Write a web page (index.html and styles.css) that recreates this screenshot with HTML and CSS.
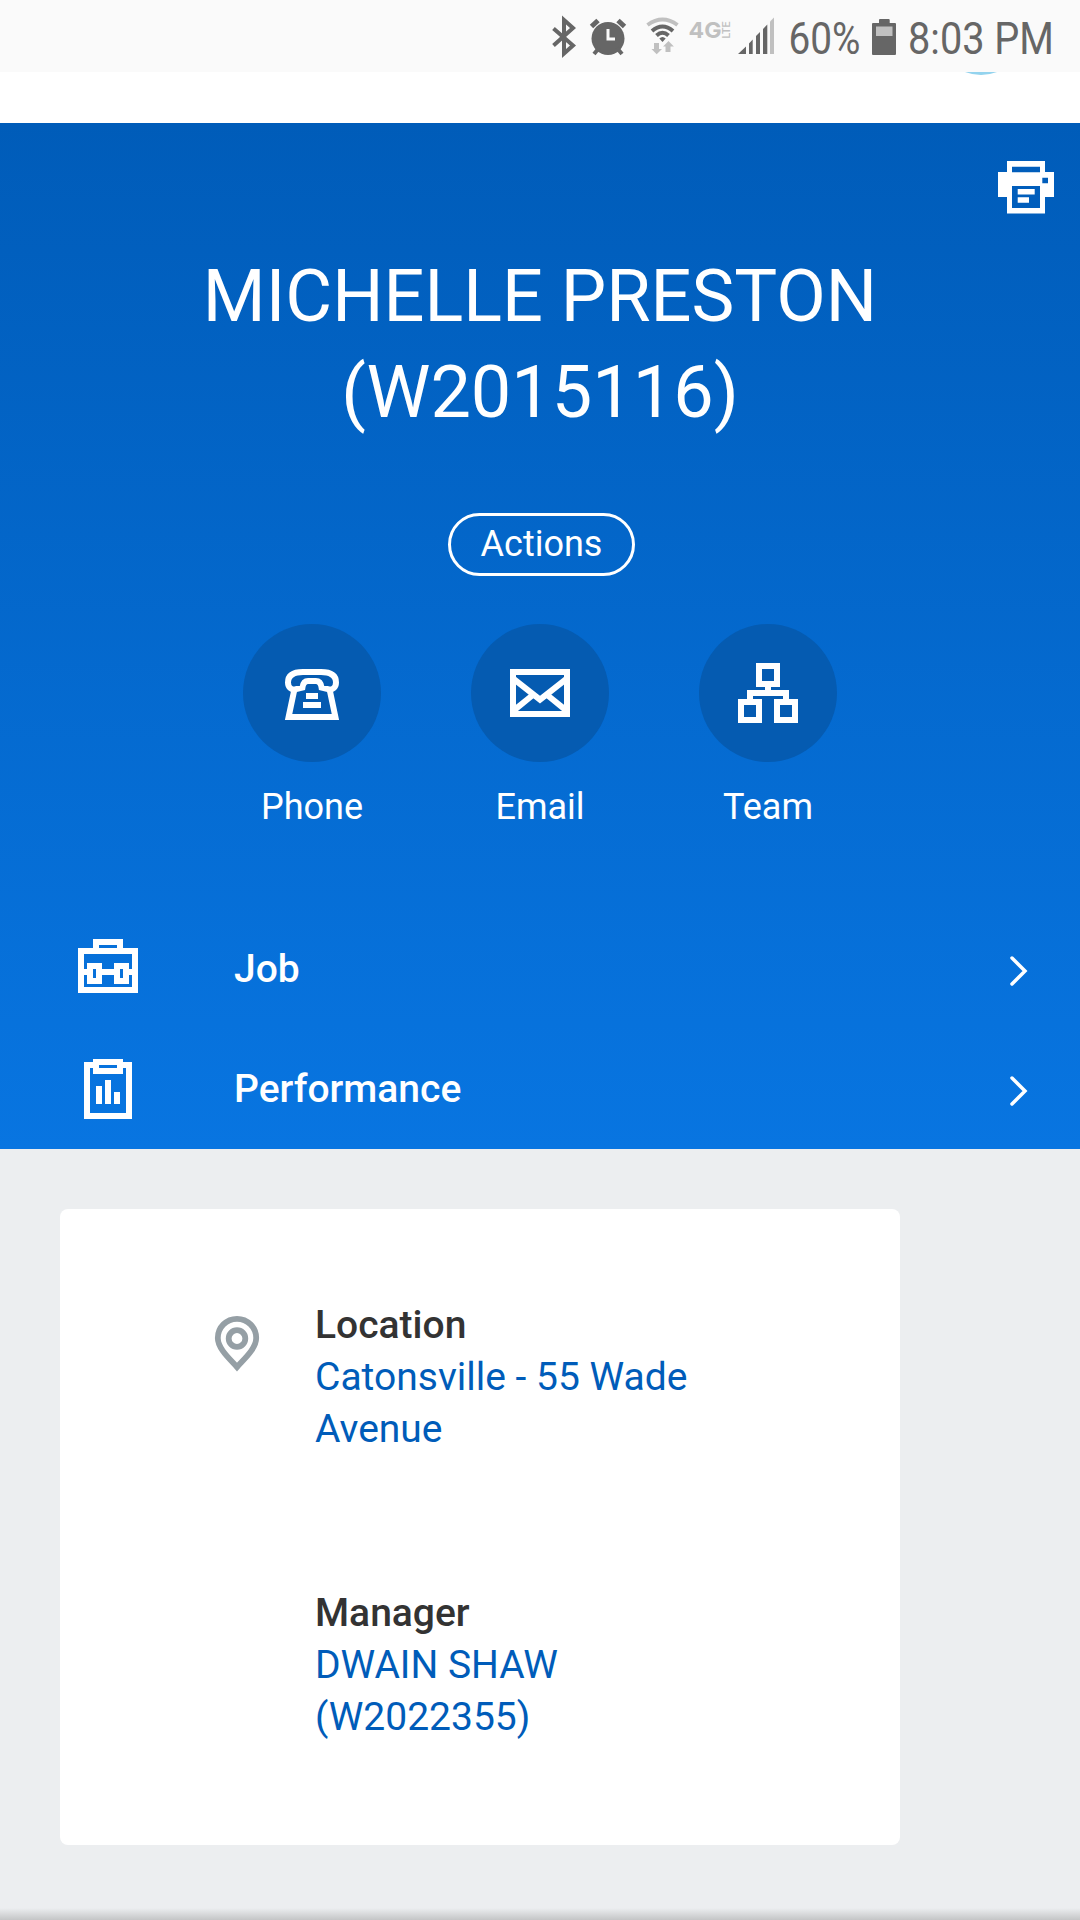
FILE: index.html
```
<!DOCTYPE html>
<html lang="en">
<head>
  <meta charset="UTF-8" />
  <meta name="viewport" content="width=device-width, initial-scale=1.0" />
  <title>Worker Profile</title>
  <link rel="stylesheet" href="styles.css">
</head>
<body>

  <div class="statusbar">
    <!-- bluetooth -->
    <svg width="40" height="72" viewBox="545 0 40 72">
      <path class="line" d="M553.5 28.5L573 45.5L564 53.5V20L573 28L553.5 45.5" />
    </svg>
    <!-- alarm -->
    <svg width="50" height="72" viewBox="585 0 50 72">
      <circle cx="608" cy="38.5" r="16.5" />
      <path class="line" d="M594 54L599 48M622 54L617 48" />
      <path class="line bell" d="M591.5 26.5L598 20.5M618 20.5L624.5 26.5" />
      <path class="hands" d="M608 29V39H615" />
    </svg>
    <!-- wifi -->
    <svg width="50" height="72" viewBox="635 0 50 72">
      <path class="line light-line" d="M647.5 25Q662.5 14 677.5 25" />
      <path class="line" d="M652 31Q662.5 22 673 31" />
      <path class="line" d="M656.5 35.5Q662.5 30 668.5 35.5" />
      <path d="M659.3 38.5Q662.5 35.5 665.7 38.5L662.5 42Z" />
      <path class="light" d="M654 43h5v6h3l-5.3 5.3l-5.2-5.3h2.5zM665.5 52h5v-5.5h3.4l-5.4-5.5l-5.5 5.5h2.5z" />
    </svg>
    <!-- network type -->
    <svg width="50" height="72" viewBox="685 0 50 72">
      <text class="light net" x="688.5" y="38" textLength="33" lengthAdjust="spacingAndGlyphs">4G</text>
      <text class="light lte" transform="translate(730 38.5) rotate(-90)" textLength="17" lengthAdjust="spacingAndGlyphs">LTE</text>
    </svg>
    <!-- signal -->
    <svg width="45" height="72" viewBox="735 0 45 72">
      <path d="M738 54L746 46.5V54zM749 54V43.5L752.7 39.5V54zM756 54V36L760 32V54zM763 54V29L767.3 24.5V54z" />
      <path class="light" d="M770 54V21.5L774 17.5V54z" />
    </svg>
    <svg width="85" height="72" viewBox="780 0 85 72">
      <text class="clock" x="788.5" y="54" textLength="72" lengthAdjust="spacingAndGlyphs">60%</text>
    </svg>
    <!-- battery -->
    <svg width="40" height="72" viewBox="865 0 40 72">
      <path d="M873 23h6v-3q0-1 1-1h8.7q1 0 1 1v3h5.3q1 0 1 1v30q0 1-1 1h-22q-1 0-1-1V24q0-1 1-1z" />
      <rect class="light" x="876" y="26.5" width="16.5" height="9.5" />
    </svg>
    <svg width="175" height="72" viewBox="905 0 175 72">
      <text class="clock" x="908" y="54" textLength="146" lengthAdjust="spacingAndGlyphs">8:03 PM</text>
    </svg>
  </div>

  <div class="topbar">
    <div class="avatar"></div>
  </div>

  <div class="profile">
    <div class="toolbar">
      <svg class="print" width="56" height="53" viewBox="0 0 56 53">
        <path fill-rule="evenodd" d="M9 0H47V11H56V36H47V52.5H9V36H0V11H9ZM14 5.7V11.2H42V5.7ZM44.3 16.7V22.3H50V16.7ZM14 25V47H42V25Z" />
        <path d="M19.7 28h17v5.4h-17zM19.7 36.2H31v5.6H19.7z" />
      </svg>
    </div>

    <h1>MICHELLE PRESTON<br>(W2015116)</h1>

    <button class="actions">Actions</button>

    <div class="contacts">
      <div class="contact">
        <div class="circle">
          <svg class="icon" viewBox="0 0 24 24">
            <path d="M9 5H15C18 5 20 6 20 8.5C20 10.2 18.7 11.2 17.3 10.7L15.2 10.2C15 8.8 14.5 8 13.3 8H10.7C9.5 8 9 8.8 8.8 10.2L6.7 10.7C5.3 11.2 4 10.2 4 8.5C4 6 6 5 9 5Z" />
            <path d="M6.2 10.5L4.2 20H19.8L17.8 10.5M10 13H14M9 16H15" />
          </svg>
        </div>
        <span>Phone</span>
      </div>
      <div class="contact">
        <div class="circle">
          <svg class="icon" viewBox="0 0 24 24">
            <path d="M3 5H21V19H3Z" />
            <path d="M3.3 7.4L12 14.2L20.7 7.4M3.5 17.6L9.2 13M20.5 17.6L14.8 13" />
          </svg>
        </div>
        <span>Email</span>
      </div>
      <div class="contact">
        <div class="circle">
          <svg class="icon" viewBox="0 0 24 24">
            <path d="M9 3H15V9H9ZM3 15H9V21H3ZM15 15H21V21H15ZM12 9V12M6 15V12H18V15" />
          </svg>
        </div>
        <span>Team</span>
      </div>
    </div>

    <div class="menu">
      <div class="menu-item">
        <svg class="icon" viewBox="0 0 24 24">
          <path d="M3 7H21V20H3ZM8 7V4H16V7M4 14H5M10 14H14M19 14H20M6 12H9V17H6ZM15 12H18V17H15Z" />
        </svg>
        <span>Job</span>
        <svg class="chevron" width="20" height="34" viewBox="0 0 20 34">
          <path d="M3 4L16 17L3 30" />
        </svg>
      </div>
      <div class="menu-item">
        <svg class="icon" viewBox="0 0 24 24">
          <path d="M8 5H5V22H19V5H16M8 4H16V7H8ZM9 12V18M12 10V18M15 14V18" />
        </svg>
        <span>Performance</span>
        <svg class="chevron" width="20" height="34" viewBox="0 0 20 34">
          <path d="M3 4L16 17L3 30" />
        </svg>
      </div>
    </div>
  </div>

  <div class="content">
    <div class="card">
      <div class="field">
        <svg class="pin" width="46" height="56" viewBox="0 0 46 56">
          <path d="M23 51C17 44 3.8 33 3.8 22A19.2 19.2 0 0 1 42.2 22C42.2 33 29 44 23 51Z" />
          <circle cx="23" cy="22.5" r="8.3" />
        </svg>
        <div class="field-text">
          <div class="label">Location</div>
          <a>Catonsville - 55 Wade Avenue</a>
        </div>
      </div>
      <div class="field">
        <div class="field-text">
          <div class="label">Manager</div>
          <a>DWAIN SHAW (W2022355)</a>
        </div>
      </div>
    </div>
    <div class="bottom-shadow"></div>
  </div>

</body>
</html>
```
FILE: styles.css
```
* {
  box-sizing: border-box;
}

body {
  margin: 0;
  width: 1080px;
  height: 1920px;
  overflow: hidden;
  display: flex;
  flex-direction: column;
  font-family: Roboto, sans-serif;
  background: #eceef0;
}

svg {
  display: block;
  flex: none;
  overflow: visible;
}

/* phone status bar */
.statusbar {
  display: flex;
  justify-content: flex-end;
  height: 72px;
  background: #fafafa;
  fill: #666;
}

.line {
  fill: none;
  stroke: #666;
  stroke-width: 4;
}

.bell {
  stroke-width: 5;
}

.hands {
  fill: none;
  stroke: #fafafa;
  stroke-width: 3;
}

.light {
  fill: #c0c0c0;
}

.light-line {
  stroke: #c0c0c0;
}

.net {
  font-family: Inter, sans-serif;
  font-size: 22px;
  font-weight: 700;
}

.lte {
  font-size: 11px;
  font-weight: 500;
}

.clock {
  font-size: 45px;
}

.topbar {
  position: relative;
  height: 51px;
  background: #fff;
  overflow: hidden;
}

.avatar {
  position: absolute;
  top: -85px;
  left: 937px;
  width: 88px;
  height: 88px;
  border-radius: 50%;
  background: #93d3ee;
}

/* blue header */
.profile {
  height: 1026px;
  display: flex;
  flex-direction: column;
  align-items: center;
  background: linear-gradient(#005cb9, #0875e1);
  color: #fff;
}

.toolbar {
  align-self: stretch;
  display: flex;
  justify-content: flex-end;
  height: 126px;
  padding: 38px 26px 0 0;
}

.print {
  fill: #fff;
}

h1 {
  margin: 0;
  font-size: 72px;
  line-height: 96px;
  font-weight: 400;
  text-align: center;
}

.actions {
  width: 187px;
  height: 63px;
  margin: 72px 0 48px 2px;
  padding: 0 0 2px 1px;
  border: 3px solid #fff;
  border-radius: 32px;
  background: none;
  color: #fff;
  font-family: inherit;
  font-size: 36px;
}

.contacts {
  display: flex;
  gap: 90px;
  height: 282px;
}

.contact {
  width: 138px;
  text-align: center;
  font-size: 36px;
  line-height: 48px;
}

.circle {
  display: flex;
  align-items: center;
  justify-content: center;
  width: 138px;
  height: 138px;
  margin-bottom: 21px;
  border-radius: 50%;
  background: #055bb1;
}

.icon {
  width: 72px;
  height: 72px;
  fill: none;
  stroke: #fff;
  stroke-width: 2;
}

.menu {
  align-self: stretch;
}

.menu-item {
  display: flex;
  align-items: center;
  height: 120px;
  padding: 0 51px 0 72px;
  font-size: 39px;
  font-weight: 500;
}

.menu-item span {
  flex: 1;
  padding: 6px 0 0 90px;
}

.chevron {
  margin-top: 9px;
  fill: none;
  stroke: #fff;
  stroke-width: 3.5;
  stroke-linecap: round;
}

/* details */
.content {
  flex: 1;
  display: flex;
  flex-direction: column;
  justify-content: space-between;
  padding-top: 60px;
}

.card {
  width: 840px;
  height: 636px;
  margin-left: 60px;
  padding: 90px 203px 0 154px;
  border-radius: 8px;
  background: #fff;
}

.field {
  display: flex;
  height: 288px;
  font-size: 39px;
  line-height: 52px;
}

.field-text {
  width: 382px;
  margin-left: auto;
}

.label {
  font-weight: 500;
  color: #333;
}

.field a {
  color: #005cb9;
}

.pin {
  margin-top: 17px;
  fill: none;
  stroke: #959fa5;
  stroke-width: 5.8;
}

.bottom-shadow {
  height: 12px;
  background: linear-gradient(#eceef0, #c4c5c6);
}
```
